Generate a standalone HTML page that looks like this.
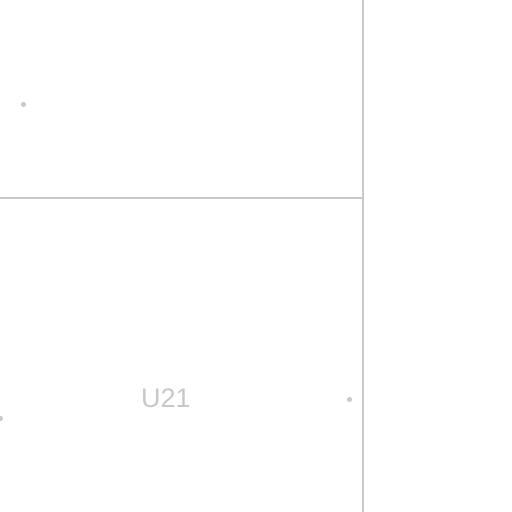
<!DOCTYPE html>
<html><head><style>
html,body{margin:0;padding:0;background:#fff;width:512px;height:512px;overflow:hidden;position:relative;font-family:"Liberation Sans",sans-serif}
.v{position:absolute;left:362px;top:0;width:2px;height:512px;background:#c8c8c8}
.h{position:absolute;left:0;top:197px;width:362px;height:2px;background:#c8c8c8}
.d{position:absolute;width:5px;height:5px;border-radius:50%;background:#c3c9d0}
.t{position:absolute;left:141px;top:382px;font-size:27px;color:#c8c8c8;line-height:32px}
</style></head><body>
<div class="v"></div><div class="h"></div>
<div class="d" style="left:21px;top:102px"></div>
<div class="d" style="left:347px;top:397px"></div>
<div class="d" style="left:-2px;top:416px"></div>
<div class="t">U21</div>
</body></html>
